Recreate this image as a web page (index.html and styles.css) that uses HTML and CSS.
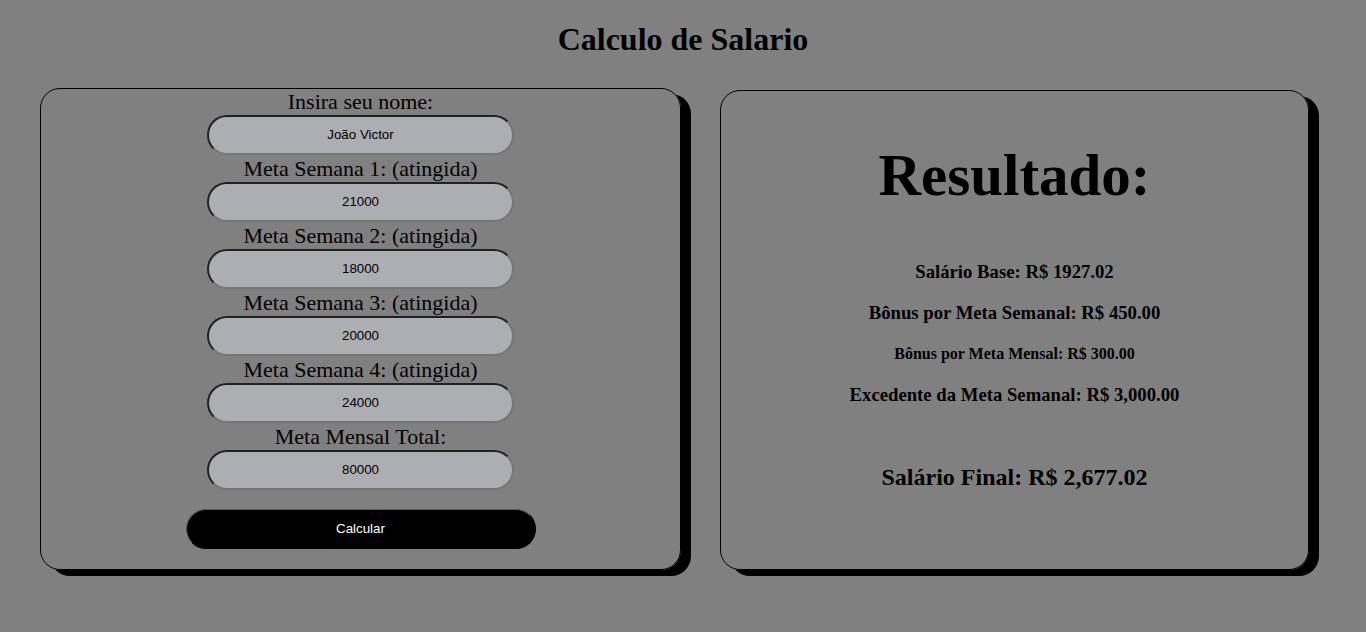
FILE: index.html
```html
<!DOCTYPE html>
<html lang="pt-BR">
<head>
<meta charset="utf-8">
<title>Calculo de Salario</title>
<link rel="stylesheet" href="styles.css">
</head>
<body>
<h1 class="title">Calculo de Salario</h1>
<main class="layout">
  <form class="card form-card">
    <label class="field-label" for="nome">Insira seu nome:</label>
    <input class="field" id="nome" type="text" value="João Victor">
    <label class="field-label" for="s1">Meta Semana 1: (atingida)</label>
    <input class="field" id="s1" type="text" value="21000">
    <label class="field-label" for="s2">Meta Semana 2: (atingida)</label>
    <input class="field" id="s2" type="text" value="18000">
    <label class="field-label" for="s3">Meta Semana 3: (atingida)</label>
    <input class="field" id="s3" type="text" value="20000">
    <label class="field-label" for="s4">Meta Semana 4: (atingida)</label>
    <input class="field" id="s4" type="text" value="24000">
    <label class="field-label" for="mensal">Meta Mensal Total:</label>
    <input class="field" id="mensal" type="text" value="80000">
    <button class="submit" type="button">Calcular</button>
  </form>
  <section class="card result-card">
    <h2 class="result-title">Resultado:</h2>
    <p class="line line-md line-first">Salário Base: R$ 1927.02</p>
    <p class="line line-md">Bônus por Meta Semanal: R$ 450.00</p>
    <p class="line line-sm">Bônus por Meta Mensal: R$ 300.00</p>
    <p class="line line-md">Excedente da Meta Semanal: R$ 3,000.00</p>
    <p class="line line-lg">Salário Final: R$ 2,677.02</p>
  </section>
</main>
</body>
</html>
```
FILE: styles.css
```css
html, body {
  margin: 0;
  padding: 0;
}
body {
  background: #808080;
  font-family: "Liberation Serif", "Times New Roman", serif;
  color: #000;
  height: 632px;
  overflow: hidden;
}
.title {
  font-size: 32px;
  font-weight: bold;
  text-align: center;
  margin: 21.44px 0;
}
.layout {
  display: flex;
  align-items: flex-start;
  gap: 39px;
  padding: 8px 0 0 40px;
}
.card {
  box-sizing: border-box;
  border: 1px solid #000;
  border-radius: 20px;
  box-shadow: 10px 6px 0 #000;
}
.form-card {
  width: 641px;
  display: flex;
  flex-direction: column;
  align-items: center;
  padding: 0 0 20px;
  margin: 0;
}
.field-label {
  display: block;
  font-size: 22px;
  line-height: 26px;
  text-align: center;
}
.field {
  box-sizing: border-box;
  width: 307px;
  height: 40px;
  margin: 0 0 1px;
  border: 2px inset #767676;
  border-radius: 20px;
  background: #adaeb1;
  font-family: "Liberation Sans", Arial, sans-serif;
  font-size: 13.33px;
  color: #000;
  text-align: center;
  padding: 1px 2px;
}
.submit {
  box-sizing: border-box;
  width: 350px;
  height: 40px;
  margin-top: 18px;
  border: 1px solid #5a5a5a;
  border-bottom-color: #000;
  border-right-color: #000;
  border-radius: 20px;
  background: #000;
  color: #fff;
  font-family: "Liberation Sans", Arial, sans-serif;
  font-size: 13.33px;
}
.result-card {
  width: 589px;
  margin-top: 2px;
  padding: 47px 0 80px;
  text-align: center;
}
.result-title {
  margin: 0;
  font-size: 59px;
  line-height: 74px;
  font-weight: bold;
}
.line {
  margin: 21px 0 0;
  font-weight: bold;
  line-height: 20px;
}
.line-first {
  margin-top: 50px;
}
.line-md {
  font-size: 18.72px;
}
.line-sm {
  font-size: 16px;
}
.line-lg {
  font-size: 24px;
  line-height: 24px;
  margin-top: 60px;
}
```
